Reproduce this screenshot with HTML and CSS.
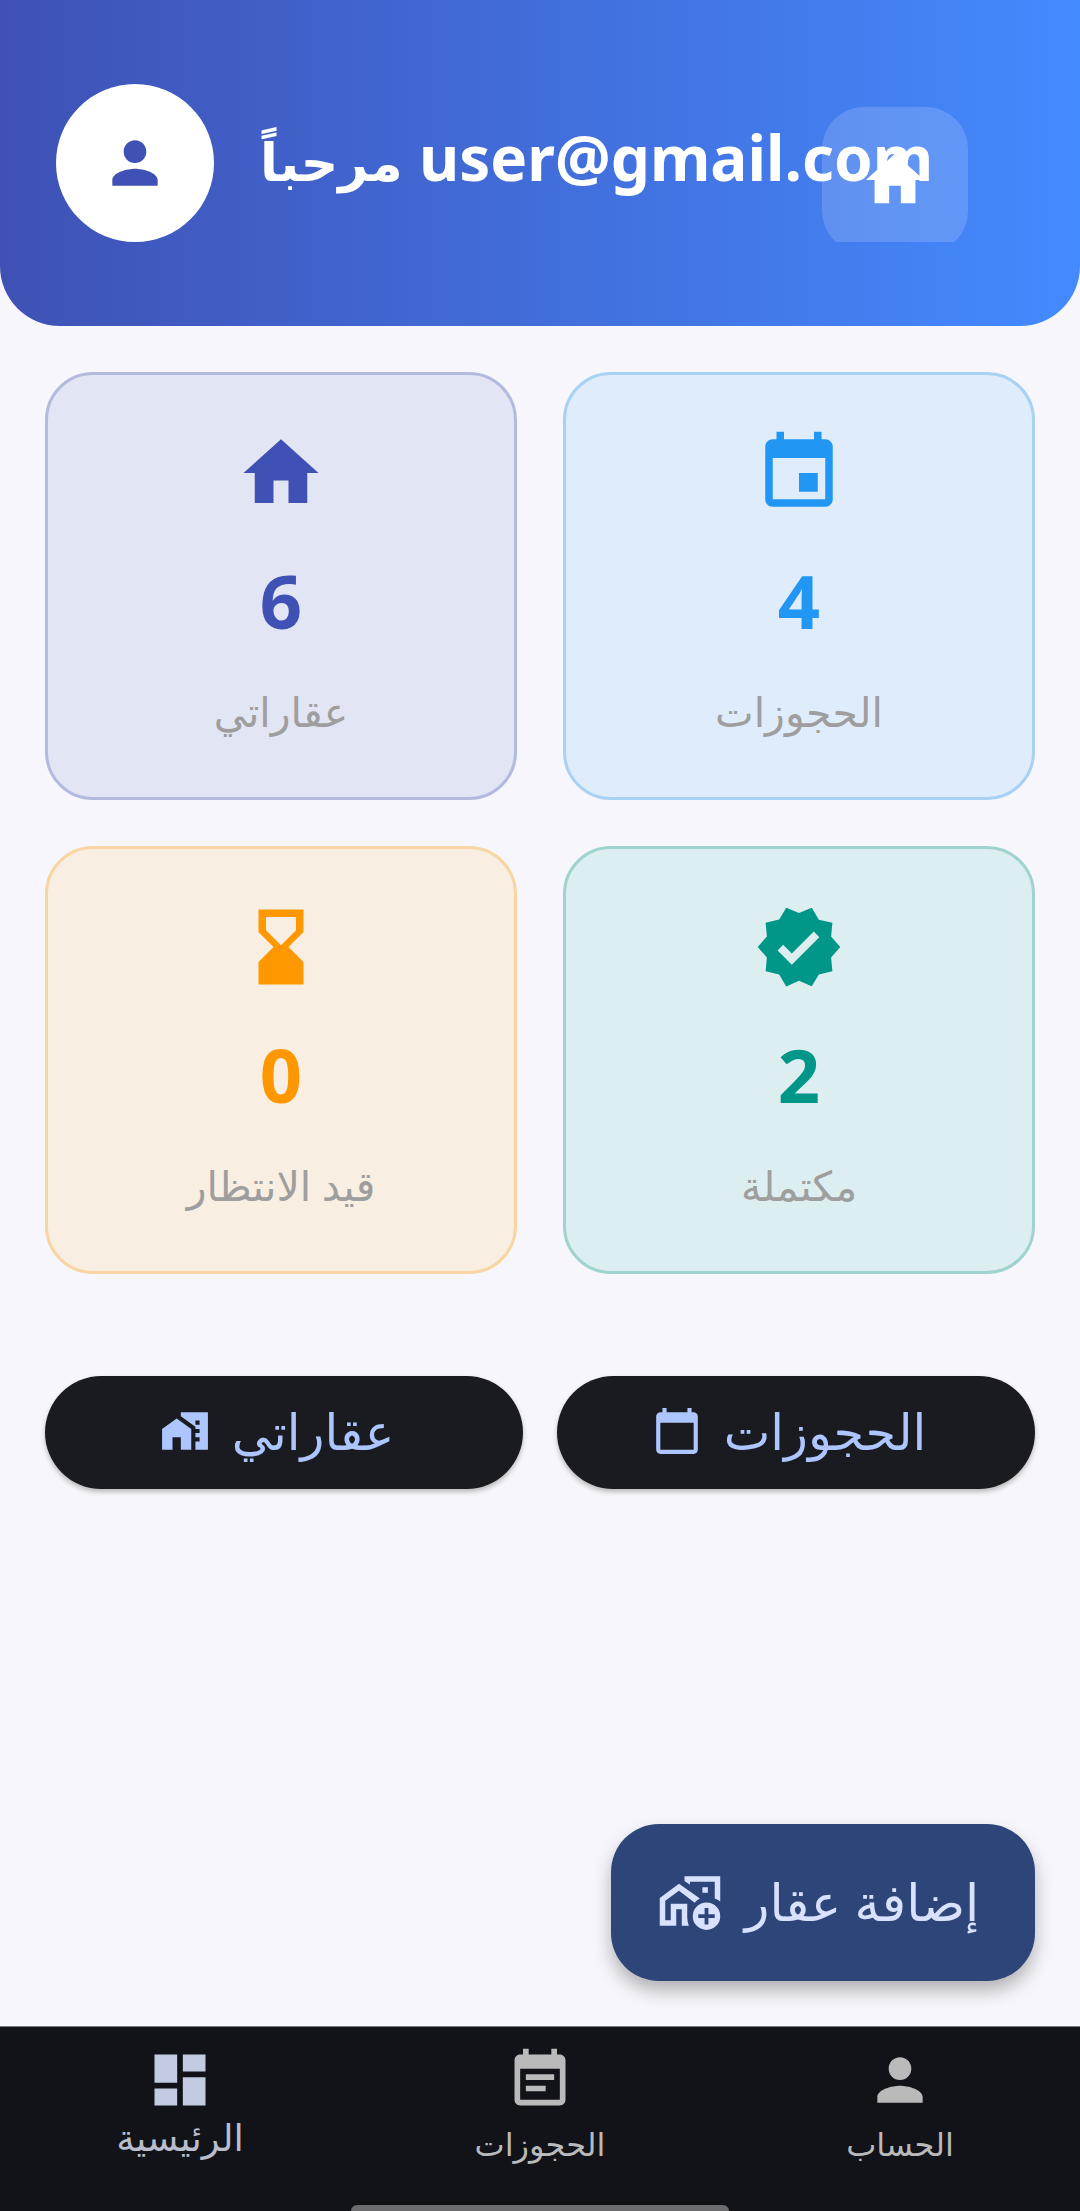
FILE: index.html
```html
<!DOCTYPE html>
<html lang="ar" dir="rtl">
<head>
    <meta charset="UTF-8">
    <meta name="viewport" content="width=device-width, initial-scale=1.0">
    <title>الرئيسية</title>
    <link rel="stylesheet" href="styles.css">
</head>
<body>
    <header class="header">
        <div class="avatar">
            <svg class="avatar-icon" viewBox="0 0 24 24"><path d="M12 12c2.21 0 4-1.79 4-4s-1.79-4-4-4-4 1.79-4 4 1.79 4 4 4zm0 2c-2.67 0-8 1.34-8 4v2h16v-2c0-2.66-5.33-4-8-4z"/></svg>
        </div>
        <div class="greeting">user@gmail.com <span class="greeting-word">مرحباً</span></div>
        <div class="home-clip">
            <div class="home-btn">
                <svg class="home-icon" viewBox="0 0 24 24"><path d="M10 20v-6h4v6h5v-8h3L12 3 2 12h3v8z"/></svg>
            </div>
        </div>
    </header>

    <main class="content">
        <section class="stats">
            <div class="stat stat-blue">
                <svg class="stat-icon" viewBox="0 0 24 24"><path d="M17 12h-5v5h5v-5zM16 1v2H8V1H6v2H5c-1.11 0-1.99.9-1.99 2L3 19c0 1.1.89 2 2 2h14c1.1 0 2-.9 2-2V5c0-1.1-.9-2-2-2h-1V1h-2zm3 18H5V8h14v11z"/></svg>
                <div class="stat-num">4</div>
                <div class="stat-label">الحجوزات</div>
            </div>
            <div class="stat stat-indigo">
                <svg class="stat-icon" viewBox="0 0 24 24"><path d="M10 20v-6h4v6h5v-8h3L12 3 2 12h3v8z"/></svg>
                <div class="stat-num">6</div>
                <div class="stat-label">عقاراتي</div>
            </div>
            <div class="stat stat-teal">
                <svg class="stat-icon" viewBox="0 0 24 24"><path d="M23 12l-2.44-2.79.34-3.69-3.61-.82-1.89-3.2L12 2.96 8.6 1.5 6.71 4.69 3.1 5.5l.34 3.7L1 12l2.44 2.79-.34 3.7 3.61.82L8.6 22.5l3.4-1.47 3.4 1.46 1.89-3.19 3.61-.82-.34-3.69L23 12zm-12.91 4.72l-3.8-3.81 1.48-1.48 2.32 2.33 5.85-5.87 1.48 1.48-7.33 7.35z"/></svg>
                <div class="stat-num">2</div>
                <div class="stat-label">مكتملة</div>
            </div>
            <div class="stat stat-orange">
                <svg class="stat-icon" viewBox="0 0 24 24"><path d="M18 22l-.01-6L14 12l3.99-4.01L18 2H6v6l4 4-4 3.99V22h12zM8 7.5V4h8v3.5l-4 4-4-4z"/></svg>
                <div class="stat-num">0</div>
                <div class="stat-label">قيد الانتظار</div>
            </div>
        </section>

        <section class="actions">
            <button class="action">
                الحجوزات
                <svg class="action-icon" viewBox="0 0 24 24"><path d="M20 3h-1V1h-2v2H7V1H5v2H4c-1.1 0-2 .9-2 2v16c0 1.1.9 2 2 2h16c1.1 0 2-.9 2-2V5c0-1.1-.9-2-2-2zm0 18H4V8h16v13z"/></svg>
            </button>
            <button class="action">
                عقاراتي
                <svg class="action-icon" viewBox="0 0 24 24"><path d="M1 11v10h5v-6h4v6h5V11L8 6zM10 3v1.97l7 5V11h2v2h-2v2h2v2h-2v4h6V3H10zm9 6h-2V7h2v2z"/></svg>
            </button>
        </section>

        <button class="fab">
            إضافة عقار
            <svg class="fab-icon" viewBox="0 0 24 24"><path fill-rule="evenodd" d="M10 3h13v9.200a6.600 6.600 0 0 0-2-1.100V5h-9v1.100L10 4.700zM16.500 7h2v2h-2zM8 5.700l7.600 5.400a6.800 6.800 0 0 0-1.900 1.500L8 8.300 3 11.900V19h2v-6h6v5c0 1 .2 2 .6 3H9v-6H7v6H1V10.900z"/><path fill-rule="evenodd" d="M18 12.500a5 5 0 1 1 0 10 5 5 0 0 1 0-10zm-.7 2v2.300H15v1.400h2.300v2.300h1.400v-2.300H21v-1.400h-2.300v-2.300z"/></svg>
        </button>
    </main>

    <nav class="nav">
        <div class="nav-item">
            <svg class="nav-icon" viewBox="0 0 24 24"><path d="M12 12c2.21 0 4-1.79 4-4s-1.79-4-4-4-4 1.79-4 4 1.79 4 4 4zm0 2c-2.67 0-8 1.34-8 4v2h16v-2c0-2.66-5.33-4-8-4z"/></svg>
            <span class="nav-label">الحساب</span>
        </div>
        <div class="nav-item">
            <svg class="nav-icon" viewBox="0 0 24 24"><path d="M17 10H7v2h10v-2zm2-7h-1V1h-2v2H8V1H6v2H5c-1.11 0-1.99.9-1.99 2L3 19c0 1.1.89 2 2 2h14c1.1 0 2-.9 2-2V5c0-1.1-.9-2-2-2zm0 16H5V8h14v11zm-5-5H7v2h7v-2z"/></svg>
            <span class="nav-label">الحجوزات</span>
        </div>
        <div class="nav-item active">
            <svg class="nav-icon" viewBox="0 0 24 24"><path d="M3 13h8V3H3v10zm0 8h8v-6H3v6zm10 0h8V11h-8v10zm0-18v6h8V3h-8z"/></svg>
            <span class="nav-label">الرئيسية</span>
        </div>
        <div class="home-bar"></div>
    </nav>
</body>
</html>
```

FILE: styles.css
```css
html, body {
    height: 100%;
}

body {
    display: flex;
    flex-direction: column;
    margin: 0;
    font-family: 'Noto Sans', 'DejaVu Sans', sans-serif;
    background-color: #f6f6fc;
    overflow: hidden;
}

svg {
    display: block;
    fill: currentColor;
}

/* Header */
.header {
    position: relative;
    display: flex;
    flex-direction: row-reverse;
    justify-content: flex-start;
    align-items: center;
    gap: 46px;
    height: 326px;
    padding: 0 56px;
    box-sizing: border-box;
    background: linear-gradient(90deg, #3f51b5, #448aff);
    border-radius: 0 0 60px 60px;
}

.avatar {
    display: flex;
    flex: none;
    align-items: center;
    justify-content: center;
    width: 158px;
    height: 158px;
    border-radius: 50%;
    background-color: #fff;
    color: #3f51b5;
}

.avatar-icon {
    width: 68px;
    height: 68px;
}

.greeting {
    margin-top: -12px;
    font-size: 62px;
    font-weight: 700;
    color: #fff;
    white-space: nowrap;
}

.greeting-word {
    font-size: 52px;
}

.home-clip {
    position: absolute;
    top: 84px;
    left: 822px;
    width: 146px;
    height: 158px;
    overflow: hidden;
}

.home-btn {
    display: flex;
    align-items: center;
    justify-content: center;
    width: 146px;
    height: 146px;
    margin-top: 23px;
    border-radius: 42px;
    background-color: rgba(255, 255, 255, 0.16);
    color: #fff;
}

.home-icon {
    width: 70px;
    height: 70px;
}

/* Stats */
.content {
    position: relative;
    flex: 1;
    padding: 46px 45px 0;
}

.stats {
    display: grid;
    grid-template-columns: 1fr 1fr;
    grid-auto-rows: 428px;
    gap: 46px;
}

.stat {
    display: flex;
    flex-direction: column;
    align-items: center;
    padding-top: 53px;
    box-sizing: border-box;
    border: 3px solid;
    border-radius: 48px;
}

.stat-icon {
    width: 90px;
    height: 90px;
}

.stat-num {
    margin-top: 33px;
    font-size: 74px;
    font-weight: 700;
    line-height: 100px;
}

.stat-label {
    margin-top: 30px;
    font-size: 41px;
    line-height: 60px;
    color: #9e9e9e;
}

.stat-blue {
    background-color: #dfecfb;
    border-color: #a8d1f3;
    color: #2196f3;
}

.stat-indigo {
    background-color: #e2e5f3;
    border-color: #b3bae0;
    color: #3f51b5;
}

.stat-teal {
    background-color: #dceef0;
    border-color: #a0d3cf;
    color: #009688;
}

.stat-orange {
    background-color: #f8eee2;
    border-color: #f8d5a1;
    color: #ff9800;
}

/* Action buttons */
.actions {
    display: grid;
    grid-template-columns: 1fr 1fr;
    gap: 34px;
    margin-top: 102px;
}

.action {
    display: flex;
    align-items: center;
    justify-content: center;
    gap: 22px;
    height: 113px;
    padding: 0 14px 4px 0;
    border: none;
    border-radius: 57px;
    font-family: inherit;
    font-size: 49.5px;
    color: #adc6ff;
    background-color: #1a1b20;
    box-shadow: 0 3px 5px rgba(0, 0, 0, 0.25);
}

.action-icon {
    flex: none;
    width: 50px;
    height: 50px;
}

.fab {
    position: absolute;
    left: 611px;
    bottom: 45px;
    display: flex;
    align-items: center;
    justify-content: center;
    gap: 22px;
    width: 424px;
    height: 157px;
    padding: 0 10px 4px 0;
    border: none;
    border-radius: 48px;
    font-family: inherit;
    font-size: 51px;
    color: #d8e2ff;
    background-color: #2d4578;
    box-shadow: 0 10px 18px rgba(0, 0, 0, 0.28);
}

.fab-icon {
    flex: none;
    width: 66px;
    height: 66px;
}

/* Bottom navigation */
.nav {
    position: relative;
    display: grid;
    grid-template-columns: repeat(3, 1fr);
    height: 185px;
    box-sizing: border-box;
    padding-top: 19px;
    border-top: 1px solid #77787c;
    background-color: #111318;
    color: #bababa;
}

.nav-item {
    display: flex;
    flex-direction: column;
    align-items: center;
}

.nav-icon {
    width: 68px;
    height: 68px;
}

.nav-label {
    font-size: 32px;
    line-height: 60px;
}

.nav-item.active {
    color: #c3cbe3;
}

.nav-item.active .nav-label {
    margin-top: -7px;
    font-size: 37px;
    color: #b9bdcc;
}

.home-bar {
    position: absolute;
    left: 351px;
    bottom: 0;
    width: 378px;
    height: 6px;
    border-radius: 6px 6px 0 0;
    background-color: #6b6b70;
}
```
